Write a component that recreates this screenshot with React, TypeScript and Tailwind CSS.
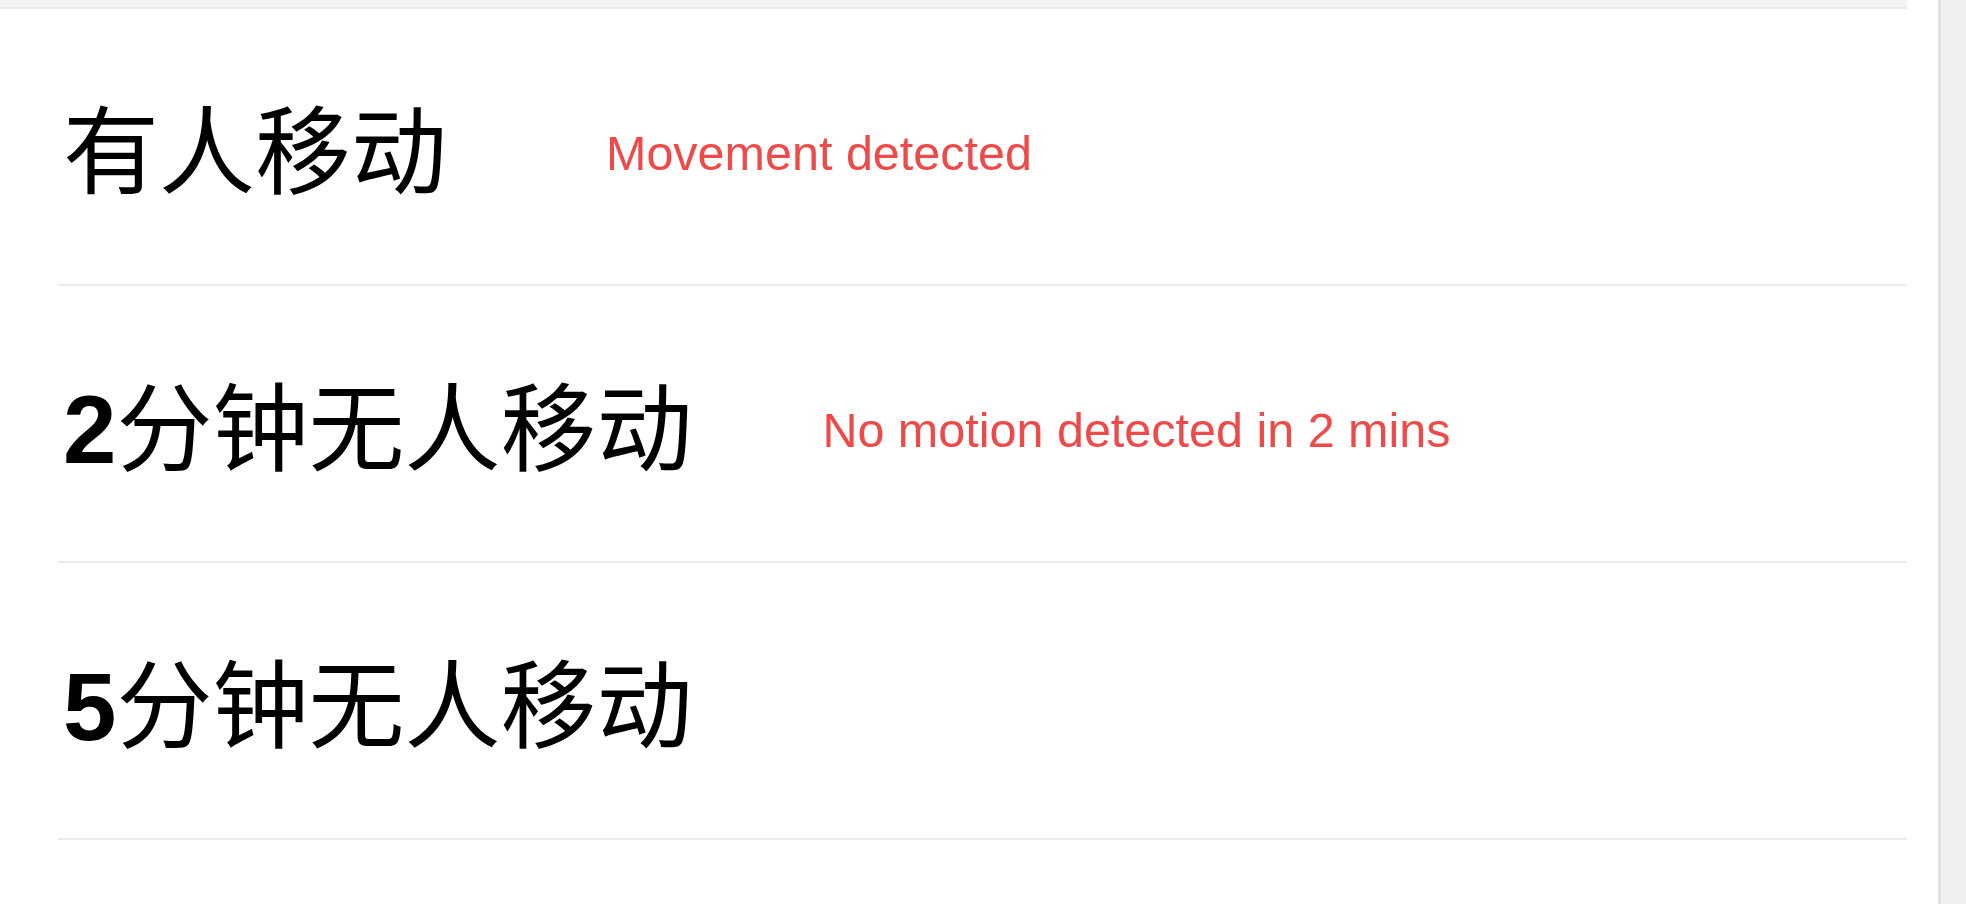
import React from 'react';

type MotionRow = {
    count?: string;
    label: string;
    hint?: string;
    hintGap?: string;
};

const rows: MotionRow[] = [
    { label: '有人移动', hint: 'Movement detected', hintGap: 'ml-[159px]' },
    { count: '2', label: '分钟无人移动', hint: 'No motion detected in 2 mins', hintGap: 'ml-[130px]' },
    { count: '5', label: '分钟无人移动' },
];

const App = () => {
    return (
        <div className="flex h-screen w-full overflow-hidden bg-white font-['Liberation_Sans','Noto_Sans_CJK_SC',sans-serif]">
            <div className="flex-1 pr-[31px]">
                <div className="h-[9px] bg-[#f4f4f4] border-b-2 border-[#e9e9e9]" />

                <ul className="pl-[58px]">
                    {rows.map((row, i) => (
                        <li
                            key={i}
                            className="flex h-[277px] items-center border-b-2 border-[#ececec] pt-[13px] pl-[5px]"
                        >
                            <span className="text-[96px] leading-none text-black">
                                {row.count && <span className="font-bold">{row.count}</span>}
                                {row.label}
                            </span>
                            {row.hint && (
                                <span className={`${row.hintGap} text-[48.5px] leading-none text-[#ef4a4a]`}>
                                    {row.hint}
                                </span>
                            )}
                        </li>
                    ))}
                </ul>
            </div>

            {/* scroll track */}
            <div className="w-[28px] h-full bg-[#f0f0f0] border-l-[3px] border-[#e2e2e2]" />
        </div>
    );
};

export default App;
